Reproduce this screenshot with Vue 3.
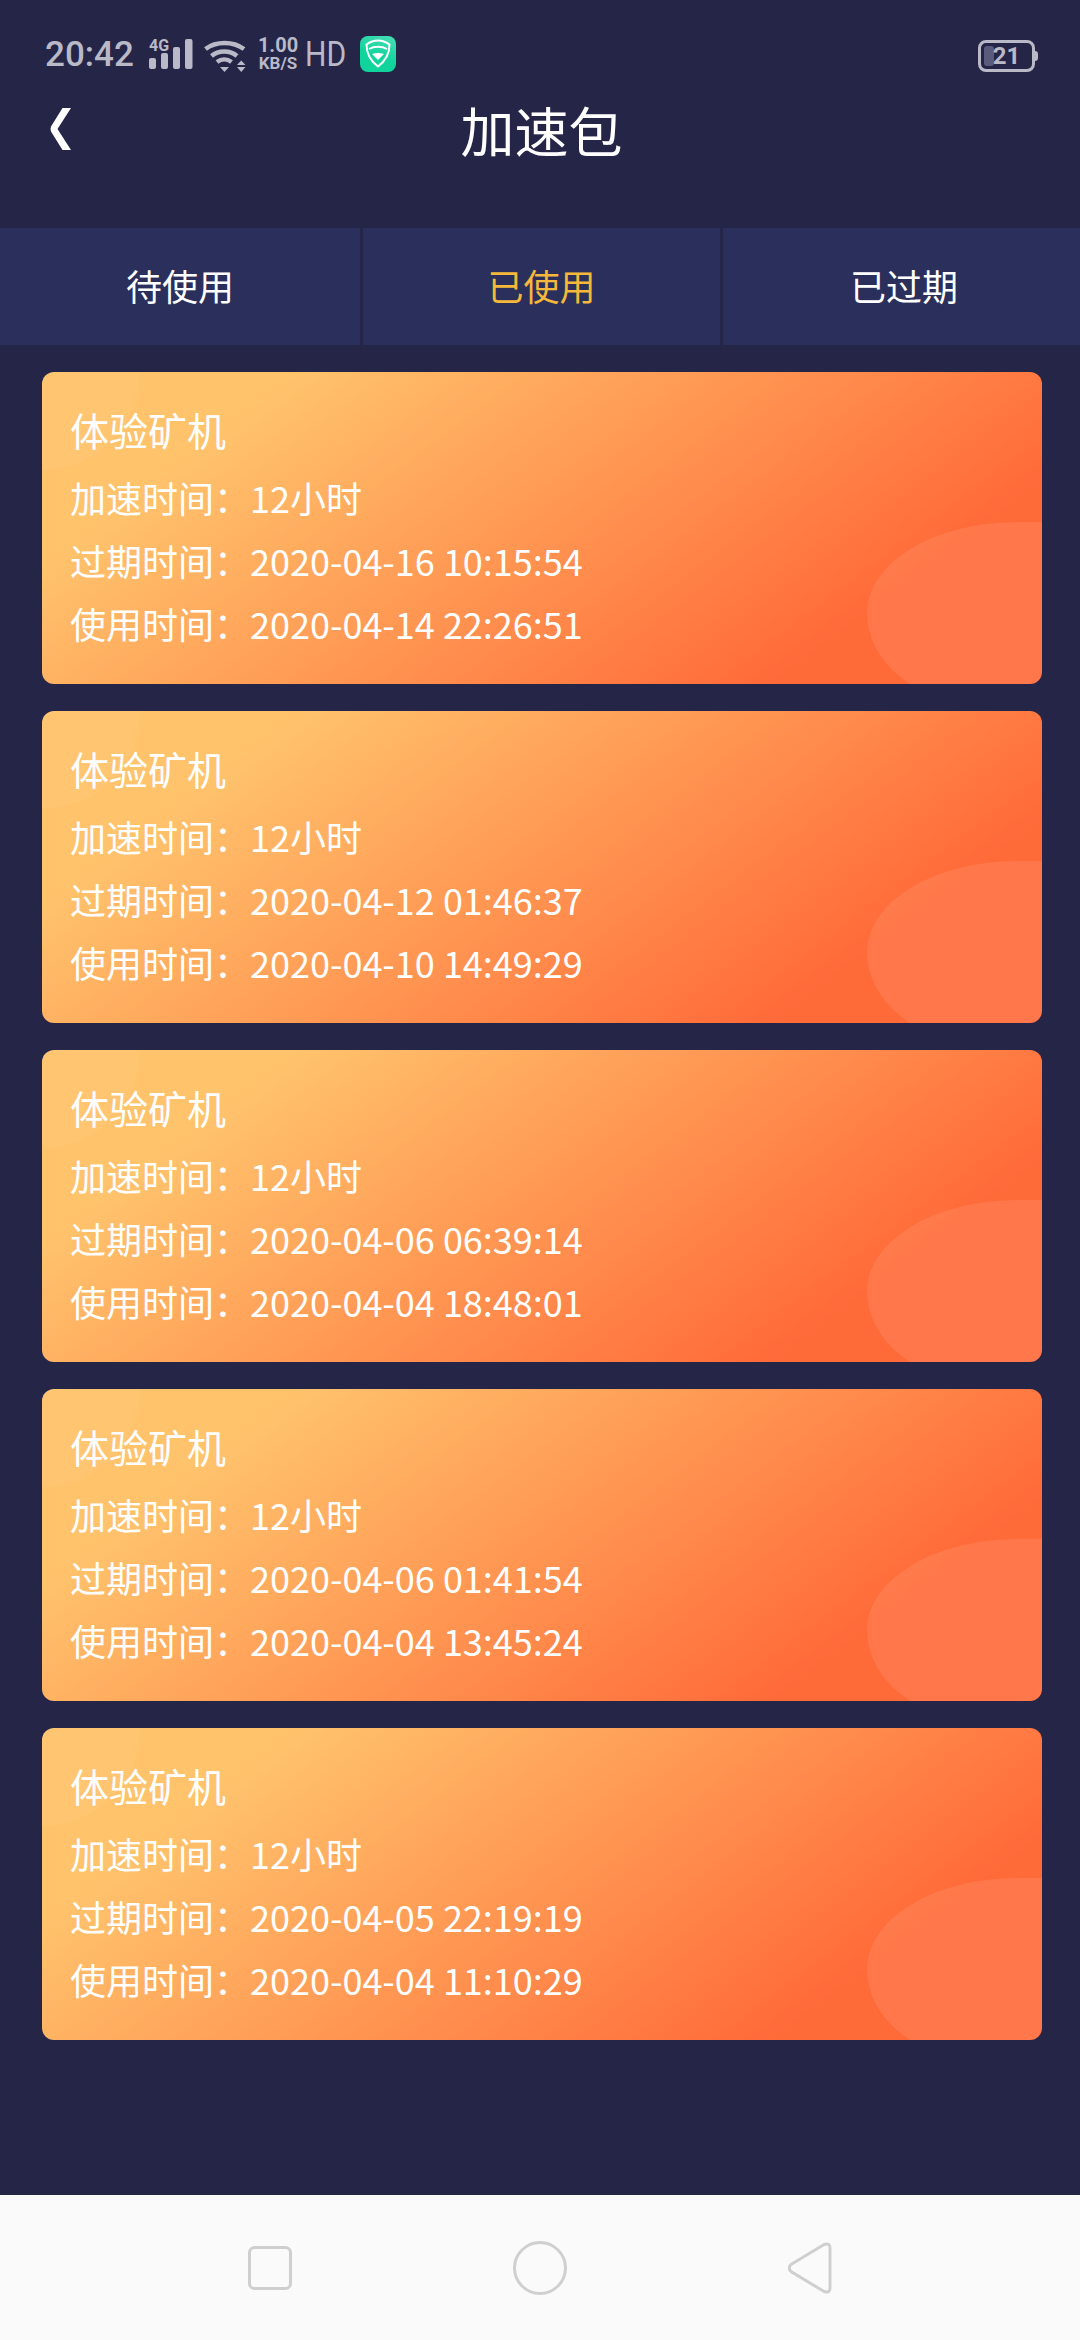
<template>
  <div class="page">
    <div class="status">
      <span class="time">20:42</span>
      <svg class="signal" width="44" height="33" viewBox="0 -3 44 33">
        <text x="0" y="12" class="net">4G</text>
        <rect x="0" y="19" width="7" height="11" rx="2" />
        <rect x="12" y="14" width="7" height="16" rx="2" />
        <rect x="24" y="8" width="7" height="22" rx="2" />
        <rect x="36" y="0" width="7.500" height="30" rx="2" />
      </svg>
      <svg class="wifi" width="42" height="32" viewBox="0 0 42 32">
        <path d="M1.500 9C12 1 29 1 40 9" />
        <path d="M7.500 16C14.500 10 26 10 33 16" />
        <path d="M13 22C17.500 18.500 23 18.500 27.500 22" />
        <path class="solid" d="M16 27h9l-4.500 5z" />
        <path class="solid" d="M33 25h8.500l-4.250-4.500zM33 27h8.500l-4.250 5z" />
      </svg>
      <div class="speed">
        <span class="num">1.00</span>
        <span class="unit">KB/S</span>
      </div>
      <span class="hd">HD</span>
      <svg class="shield" width="36" height="36" viewBox="0 0 36 36">
        <defs>
          <linearGradient id="shieldBg" x1="0.8" y1="0" x2="0.4" y2="1">
            <stop offset="0" stop-color="#45dcb4" />
            <stop offset="0.6" stop-color="#10d49c" />
          </linearGradient>
        </defs>
        <rect width="36" height="36" rx="8" fill="url(#shieldBg)" />
        <path d="M18 4.500C22 4.500 26 6 29.500 8.500C29.500 17 25.500 25 18 30.500C10.500 25 6.500 17 6.500 8.500C10 6 14 4.500 18 4.500Z" fill="none" stroke="#fff" stroke-width="2" />
        <path d="M9 13C14 10 22 10 27 13" fill="none" stroke="#fff" stroke-width="2" />
        <path d="M12 18C15.500 16.500 20.500 16.500 24 18L18 24z" fill="#fff" />
      </svg>
      <div class="battery">
        <span class="level"></span>
        <span class="pct">21</span>
      </div>
    </div>

    <div class="header">
      <svg class="back" width="22" height="42" viewBox="0 0 22 42">
        <path d="M12.500 0H21L7.500 21L21 42H12.500L1 23.500Q0 21 1 18.500Z" />
      </svg>
      <h1 class="title">加速包</h1>
    </div>

    <div class="tabs">
      <div v-for="tab in tabs" :key="tab" class="tab" :class="{ active: tab === current }">{{ tab }}</div>
    </div>

    <div class="list">
      <div v-for="(item, index) in items" :key="index" class="card">
        <span class="blob-top"></span>
        <span class="blob-bottom"></span>
        <div class="card-title">体验矿机</div>
        <div class="row">加速时间：12小时</div>
        <div class="row">过期时间：{{ item.expire }}</div>
        <div class="row">使用时间：{{ item.used }}</div>
      </div>
    </div>

    <div class="navbar">
      <svg width="44" height="44" viewBox="0 0 44 44">
        <rect x="1.500" y="1.500" width="41" height="41" rx="5" />
      </svg>
      <svg width="54" height="54" viewBox="0 0 54 54">
        <circle cx="27" cy="27" r="25.500" />
      </svg>
      <svg width="44" height="52" viewBox="0 0 44 52">
        <path d="M3 22.500L36 2.500Q42 0.500 42 6V46Q42 51.500 36 49.500L3 29.500Q-0.500 26 3 22.500Z" />
      </svg>
    </div>
  </div>
</template>

<script setup>
import { ref } from 'vue';

const tabs = ['待使用', '已使用', '已过期'];
const current = ref('已使用');

const items = [
  { expire: '2020-04-16 10:15:54', used: '2020-04-14 22:26:51' },
  { expire: '2020-04-12 01:46:37', used: '2020-04-10 14:49:29' },
  { expire: '2020-04-06 06:39:14', used: '2020-04-04 18:48:01' },
  { expire: '2020-04-06 01:41:54', used: '2020-04-04 13:45:24' },
  { expire: '2020-04-05 22:19:19', used: '2020-04-04 11:10:29' },
];
</script>

<style>
body {
  margin: 0;
  background: #252547;
}
</style>

<style scoped>
.page {
  display: flex;
  flex-direction: column;
  width: 1080px;
  height: 2340px;
  overflow: hidden;
  background: #252547;
  font-family: "Noto Sans CJK SC", "Noto Sans", sans-serif;
  color: #fff;
}
.status {
  display: flex;
  align-items: center;
  height: 36px;
  padding: 36px 45px 0 45px;
  color: #b9b9c8;
}
.time {
  width: 88px;
  font-family: Roboto, sans-serif;
  font-weight: 500;
  font-size: 35px;
  line-height: 36px;
  margin-top: 2px;
}
.signal {
  fill: #b9b9c8;
  margin-left: 16px;
  margin-top: -3px;
}
.net {
  font-family: Roboto, sans-serif;
  font-weight: 700;
  font-size: 16px;
}
.wifi {
  margin-left: 11px;
  margin-top: 3px;
  fill: none;
  stroke: #b9b9c8;
  stroke-width: 4.500;
}
.wifi .solid {
  fill: #b9b9c8;
  stroke: none;
}
.speed {
  display: flex;
  flex-direction: column;
  align-items: center;
  width: 40px;
  margin-left: 12px;
  font-family: Roboto, sans-serif;
  line-height: 18px;
}
.num {
  font-size: 20px;
  font-weight: 700;
}
.unit {
  font-size: 17px;
  font-weight: 700;
}
.hd {
  width: 44px;
  margin-left: 7px;
  margin-top: 1px;
  font-family: Roboto, sans-serif;
  font-weight: 400;
  font-size: 35px;
  line-height: 36px;
  transform: scaleX(0.86);
  transform-origin: left center;
}
.shield {
  margin-left: 11px;
}
.battery {
  position: relative;
  display: flex;
  align-items: center;
  justify-content: center;
  box-sizing: border-box;
  width: 57px;
  height: 32px;
  margin-left: auto;
  margin-top: 4px;
  border: 3px solid #b9b9c8;
  border-radius: 8px;
}
.battery::after {
  content: "";
  position: absolute;
  right: -6px;
  top: 8px;
  width: 3px;
  height: 10px;
  background: #b9b9c8;
  border-radius: 0 3px 3px 0;
}
.level {
  position: absolute;
  left: 3px;
  top: 3px;
  bottom: 3px;
  width: 10px;
  background: #5a5a7c;
  border-radius: 3px;
}
.pct {
  position: relative;
  font-family: Roboto, sans-serif;
  font-weight: 700;
  font-size: 24px;
  line-height: 1;
}
.header {
  position: relative;
  display: flex;
  justify-content: center;
  align-items: center;
  height: 88px;
  margin-top: 14px;
}
.back {
  position: absolute;
  left: 50px;
  top: 22px;
  fill: #fff;
}
.title {
  margin: 0 0 0 3px;
  font-size: 54px;
  font-weight: 400;
  line-height: 88px;
}
.tabs {
  display: grid;
  grid-template-columns: 360px 357px 357px;
  gap: 3px;
  margin-top: 54px;
}
.tab {
  height: 117px;
  line-height: 115px;
  text-align: center;
  font-size: 36px;
  background: #2a2f5b;
}
.tab:last-child {
  padding-left: 5px;
}
.tab.active {
  color: #f5b83a;
}
.list {
  display: flex;
  flex-direction: column;
  gap: 27px;
  padding: 27px 38px 0 42px;
}
.card {
  position: relative;
  overflow: hidden;
  box-sizing: border-box;
  height: 312px;
  padding: 26px 28px;
  border-radius: 12px;
  background: linear-gradient(143deg, #ffc36c 18%, #ff6a39 81%);
  font-size: 36px;
  line-height: 63px;
}
.blob-top {
  position: absolute;
  left: -98px;
  top: -98px;
  width: 196px;
  height: 196px;
  border-radius: 50%;
  background: rgba(255, 255, 255, 0.04);
}
.blob-bottom {
  position: absolute;
  left: 825px;
  top: 150px;
  width: 300px;
  height: 182px;
  border-radius: 150px 100px 100px 115px / 91px;
  background: rgba(255, 255, 255, 0.09);
}
.card-title,
.row {
  position: relative;
}
.card-title {
  font-size: 39px;
  margin-bottom: 5px;
}
.navbar {
  display: flex;
  align-items: center;
  justify-content: space-between;
  height: 145px;
  margin-top: auto;
  padding: 0 248px 0 248px;
  background: #fafafa;
}
.navbar svg {
  fill: none;
  stroke: #cfcfcf;
  stroke-width: 3;
}
</style>
